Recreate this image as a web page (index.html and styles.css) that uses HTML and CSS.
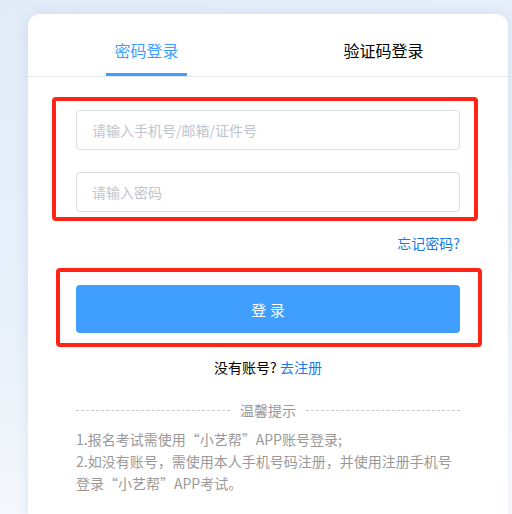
FILE: index.html
```html
<!DOCTYPE html>
<html lang="zh-CN">
<head>
    <meta charset="UTF-8">
    <meta name="viewport" content="width=device-width, initial-scale=1.0">
    <title>登录</title>
    <link rel="stylesheet" href="styles.css">
</head>
<body>
    <div class="card">
        <div class="tabs">
            <div class="tab active"><span>密码登录</span></div>
            <div class="tab"><span>验证码登录</span></div>
        </div>

        <div class="form">
            <input class="field first" type="text" placeholder="请输入手机号/邮箱/证件号">
            <input class="field" type="password" placeholder="请输入密码">

            <div class="forgot"><a href="#">忘记密码?</a></div>

            <button class="btn-login">登 录</button>

            <div class="register">没有账号? <a href="#">去注册</a></div>

            <div class="tips-title">
                <span class="dash"></span>
                <span>温馨提示</span>
                <span class="dash"></span>
            </div>
            <p class="tips">1.报名考试需使用“小艺帮”APP账号登录;<br>2.如没有账号，需使用本人手机号码注册，并使用注册手机号登录“小艺帮”APP考试。</p>
        </div>

        <!-- 标注框 -->
        <div class="mark mark-fields"></div>
        <div class="mark mark-button"></div>
    </div>
</body>
</html>
```

FILE: styles.css
```css
* {
    margin: 0;
    padding: 0;
    box-sizing: border-box;
}

body {
    min-height: 100vh;
    background: linear-gradient(160deg, #e1ebf8 0%, #e8f0fa 45%, #f7f9fc 75%, #ffffff 100%);
    font-family: "Noto Sans CJK SC", "Liberation Sans", sans-serif;
    font-size: 14px;
    color: #303133;
    padding: 14px 4px 0 28px;
    overflow: hidden;
}

.card {
    position: relative;
    width: 480px;
    height: 520px;
    background: #fff;
    border-radius: 12px;
    box-shadow: 0 2px 14px rgba(120, 150, 190, 0.18);
}

.tabs {
    display: flex;
    padding-right: 6px;
    border-bottom: 1px solid #e4e7ed;
}

.tab {
    flex: 1;
    text-align: center;
    padding-top: 24px;
    font-size: 16px;
    color: #000;
}

.tab span {
    display: inline-block;
    line-height: 24px;
    padding: 0 8px 11px;
    border-bottom: 3px solid transparent;
}

.tab.active span {
    color: #409eff;
    border-bottom-color: #409eff;
}

.form {
    padding: 33px 48px 0;
    display: flex;
    flex-direction: column;
}

.field {
    height: 40px;
    border: 1px solid #dcdfe6;
    border-radius: 4px;
    padding: 0 15px;
    font-family: inherit;
    font-size: 14px;
    outline: none;
}

.field.first {
    margin-bottom: 22px;
}

.field::placeholder {
    color: #c0c4cc;
}

.forgot {
    text-align: right;
    margin-top: 21px;
    line-height: 20px;
}

.forgot a,
.register a {
    color: #1a78e8;
    text-decoration: none;
}

.btn-login {
    margin-top: 32px;
    height: 48px;
    border: none;
    border-radius: 4px;
    background: #409eff;
    color: #fff;
    font-family: inherit;
    font-size: 15px;
}

.register {
    margin-top: 24px;
    text-align: center;
    line-height: 20px;
    color: #000;
}

.tips-title {
    margin-top: 23px;
    display: flex;
    align-items: center;
    gap: 10px;
    color: #999;
    line-height: 20px;
}

.tips-title .dash {
    flex: 1;
    border-top: 1px dashed #c8c8c8;
}

.tips {
    margin-top: 8px;
    color: #999;
    line-height: 22px;
}

.mark {
    position: absolute;
    border: 4px solid #ff2416;
    border-radius: 4px;
}

.mark-fields {
    left: 24px;
    top: 83px;
    width: 426px;
    height: 124px;
}

.mark-button {
    left: 28px;
    top: 254px;
    width: 426px;
    height: 79px;
}
```
